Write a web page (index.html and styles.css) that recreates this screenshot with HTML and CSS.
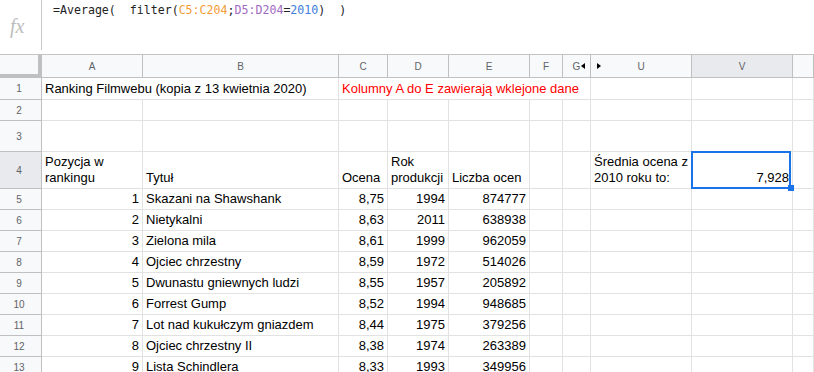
FILE: index.html
```html
<!DOCTYPE html>
<html lang="pl">
<head>
  <meta charset="UTF-8" />
  <meta name="viewport" content="width=device-width, initial-scale=1" />
  <title>Ranking Filmwebu</title>
  <link rel="stylesheet" href="styles.css">
</head>
<body>
  <!-- pasek formuły -->
  <div class="formula-bar">
    <div class="fx">fx</div>
    <div class="formula">=Average(&nbsp; filter(<span class="rng-c">C5:C204</span>;<span class="rng-d">D5:D204</span>=<span class="val">2010</span>)&nbsp; )</div>
  </div>

  <div class="sheet">
    <!-- nagłówki kolumn -->
    <div class="corner"></div>
    <div class="colhead">A</div>
    <div class="colhead">B</div>
    <div class="colhead">C</div>
    <div class="colhead">D</div>
    <div class="colhead">E</div>
    <div class="colhead">F</div>
    <div class="colhead hid-left">G<span class="arrow-left"></span></div>
    <div class="colhead hid-right"><span class="arrow-right"></span>U</div>
    <div class="colhead active">V</div>
    <div class="colhead"></div>

    <!-- 1 -->
    <div class="rowhead">1</div>
    <div class="cell span2 nowrap">Ranking Filmwebu (kopia z 13 kwietnia 2020)</div>
    <div class="cell span5 nowrap red">Kolumny A do E zawierają wklejone dane</div>
    <div class="cell"></div><div class="cell"></div><div class="cell"></div>

    <!-- 2 -->
    <div class="rowhead">2</div>
    <div class="cell"></div><div class="cell"></div><div class="cell"></div><div class="cell"></div><div class="cell"></div>
    <div class="cell"></div><div class="cell"></div><div class="cell"></div><div class="cell"></div><div class="cell"></div>

    <!-- 3 -->
    <div class="rowhead">3</div>
    <div class="cell"></div><div class="cell"></div><div class="cell"></div><div class="cell"></div><div class="cell"></div>
    <div class="cell"></div><div class="cell"></div><div class="cell"></div><div class="cell"></div><div class="cell"></div>

    <!-- 4 -->
    <div class="rowhead active">4</div>
    <div class="cell">Pozycja w rankingu</div>
    <div class="cell">Tytuł</div>
    <div class="cell">Ocena</div>
    <div class="cell">Rok produkcji</div>
    <div class="cell">Liczba ocen</div>
    <div class="cell"></div>
    <div class="cell"></div>
    <div class="cell">Średnia ocena z 2010 roku to:</div>
    <div class="cell num selected">7,928<div class="selection"><span class="handle"></span></div></div>
    <div class="cell"></div>

    <!-- 5 -->
    <div class="rowhead">5</div>
    <div class="cell num">1</div><div class="cell nowrap">Skazani na Shawshank</div><div class="cell num">8,75</div><div class="cell num">1994</div><div class="cell num">874777</div>
    <div class="cell"></div><div class="cell"></div><div class="cell"></div><div class="cell"></div><div class="cell"></div>

    <!-- 6 -->
    <div class="rowhead">6</div>
    <div class="cell num">2</div><div class="cell nowrap">Nietykalni</div><div class="cell num">8,63</div><div class="cell num">2011</div><div class="cell num">638938</div>
    <div class="cell"></div><div class="cell"></div><div class="cell"></div><div class="cell"></div><div class="cell"></div>

    <!-- 7 -->
    <div class="rowhead">7</div>
    <div class="cell num">3</div><div class="cell nowrap">Zielona mila</div><div class="cell num">8,61</div><div class="cell num">1999</div><div class="cell num">962059</div>
    <div class="cell"></div><div class="cell"></div><div class="cell"></div><div class="cell"></div><div class="cell"></div>

    <!-- 8 -->
    <div class="rowhead">8</div>
    <div class="cell num">4</div><div class="cell nowrap">Ojciec chrzestny</div><div class="cell num">8,59</div><div class="cell num">1972</div><div class="cell num">514026</div>
    <div class="cell"></div><div class="cell"></div><div class="cell"></div><div class="cell"></div><div class="cell"></div>

    <!-- 9 -->
    <div class="rowhead">9</div>
    <div class="cell num">5</div><div class="cell nowrap">Dwunastu gniewnych ludzi</div><div class="cell num">8,55</div><div class="cell num">1957</div><div class="cell num">205892</div>
    <div class="cell"></div><div class="cell"></div><div class="cell"></div><div class="cell"></div><div class="cell"></div>

    <!-- 10 -->
    <div class="rowhead">10</div>
    <div class="cell num">6</div><div class="cell nowrap">Forrest Gump</div><div class="cell num">8,52</div><div class="cell num">1994</div><div class="cell num">948685</div>
    <div class="cell"></div><div class="cell"></div><div class="cell"></div><div class="cell"></div><div class="cell"></div>

    <!-- 11 -->
    <div class="rowhead">11</div>
    <div class="cell num">7</div><div class="cell nowrap">Lot nad kukułczym gniazdem</div><div class="cell num">8,44</div><div class="cell num">1975</div><div class="cell num">379256</div>
    <div class="cell"></div><div class="cell"></div><div class="cell"></div><div class="cell"></div><div class="cell"></div>

    <!-- 12 -->
    <div class="rowhead">12</div>
    <div class="cell num">8</div><div class="cell nowrap">Ojciec chrzestny II</div><div class="cell num">8,38</div><div class="cell num">1974</div><div class="cell num">263389</div>
    <div class="cell"></div><div class="cell"></div><div class="cell"></div><div class="cell"></div><div class="cell"></div>

    <!-- 13 -->
    <div class="rowhead">13</div>
    <div class="cell num">9</div><div class="cell nowrap">Lista Schindlera</div><div class="cell num">8,33</div><div class="cell num">1993</div><div class="cell num">349956</div>
    <div class="cell"></div><div class="cell"></div><div class="cell"></div><div class="cell"></div><div class="cell"></div>
  </div>
</body>
</html>
```

FILE: styles.css
```css
body {
  margin: 0;
  background: #fff;
  font-family: "Liberation Sans", Arial, sans-serif;
  overflow: hidden;
}

.formula-bar {
  display: flex;
  height: 54px;
  border-bottom: 1px solid #c4c4c4;
}
.fx {
  width: 42px;
  height: 50px;
  border-right: 1px solid #c8c8c8;
  box-sizing: border-box;
  color: #bdbdbd;
  font-family: "Liberation Serif", serif;
  font-style: italic;
  font-size: 20px;
  padding: 15px 0 0 10px;
}
.formula {
  font-family: "DejaVu Sans Mono", "Liberation Mono", monospace;
  font-size: 11.6px;
  color: #222;
  padding: 3px 0 0 11px;
  white-space: nowrap;
}
.rng-c { color: #f39c34; }
.rng-d { color: #9f6bbf; }
.val { color: #3d7ddb; }

.sheet {
  display: grid;
  grid-template-columns: 42px 101px 196px 49px 61px 81px 33px 28px 101px 101px 1fr;
  grid-template-rows: 23px 22px 21px 31px 37px repeat(9, 21px);
  font-size: 13px;
}

.corner {
  background: #f8f9fa;
  border-right: 4px solid #c0c0c0;
  border-bottom: 4px solid #c0c0c0;
}
.colhead {
  position: relative;
  background: #f8f9fa;
  border-right: 1px solid #c0c0c0;
  border-bottom: 1px solid #c0c0c0;
  color: #5f6368;
  font-size: 10px;
  display: flex;
  align-items: center;
  justify-content: center;
  padding-top: 1px;
}
.colhead.active,
.rowhead.active {
  background: #e8eaed;
}
.arrow-left {
  position: absolute;
  right: 5px;
  top: 8px;
  border-top: 3.5px solid transparent;
  border-bottom: 3.5px solid transparent;
  border-right: 4px solid #000;
}
.arrow-right {
  position: absolute;
  left: 6px;
  top: 8px;
  border-top: 3.5px solid transparent;
  border-bottom: 3.5px solid transparent;
  border-left: 4px solid #000;
}

.rowhead {
  background: #f8f9fa;
  border-right: 1px solid #c0c0c0;
  border-bottom: 1px solid #c0c0c0;
  color: #5f6368;
  font-size: 10px;
  display: flex;
  align-items: center;
  justify-content: center;
  padding-right: 3px;
}

.cell {
  border-right: 1px solid #e2e2e2;
  border-bottom: 1px solid #e2e2e2;
  padding: 0 3px 2px;
  line-height: 16px;
  color: #000;
  display: flex;
  flex-direction: column;
  justify-content: flex-end;
  min-width: 0;
}
.num { text-align: right; }
.nowrap { white-space: nowrap; overflow: visible; }
.red { color: #ff0000; }
.span2 { grid-column: span 2; }
.span5 { grid-column: span 5; }

.selected { position: relative; }
.selection {
  position: absolute;
  top: -1px;
  left: -1px;
  width: 100px;
  height: 38px;
  box-sizing: border-box;
  border: 2px solid #1a73e8;
}
.handle {
  position: absolute;
  left: 95px;
  top: 32px;
  width: 6px;
  height: 6px;
  background: #1a73e8;
  z-index: 2;
}
```
